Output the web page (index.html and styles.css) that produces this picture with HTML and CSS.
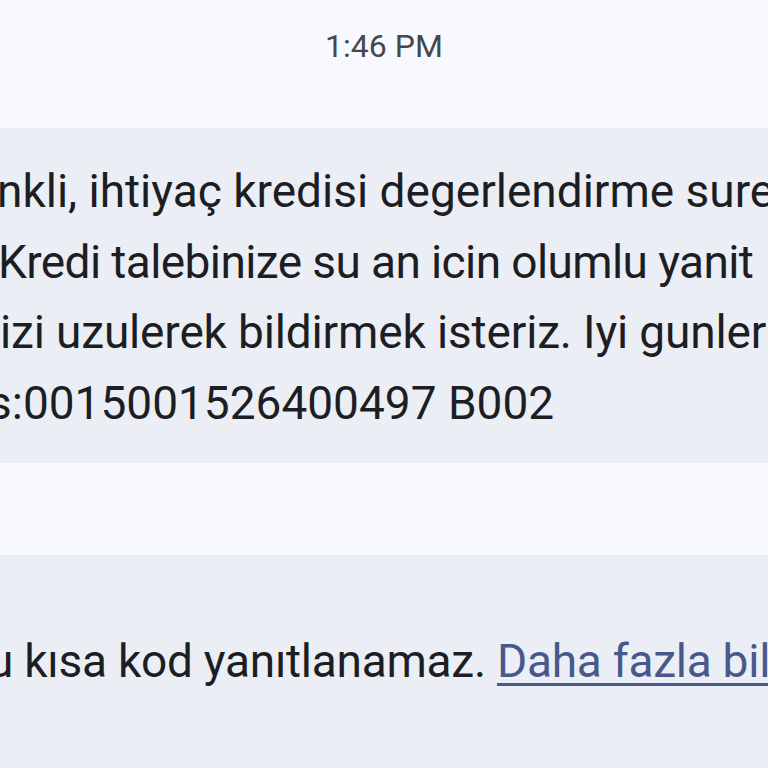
FILE: index.html
```
<!DOCTYPE html>
<html lang="tr">
<head>
<meta charset="utf-8">
<link rel="stylesheet" href="styles.css">
</head>
<body>
<div class="time">1:46 PM</div>
<div class="bubble">
  <div class="line l1">nkli, ihtiyaç kredisi degerlendirme sureci</div>
  <div class="line l2">Kredi talebinize su an icin olumlu yanit</div>
  <div class="line l3">izi uzulerek bildirmek isteriz. Iyi gunler</div>
  <div class="line l4">s:0015001526400497 B002</div>
</div>
<div class="notice">
  <div class="line l5">u kısa kod yanıtlanamaz. <span class="link">Daha fazla bilgi</span></div>
</div>
</body>
</html>
```
FILE: styles.css
```
html, body {
  margin: 0;
  padding: 0;
  background: #f8f9fe;
  width: 768px;
  height: 768px;
  overflow: hidden;
  font-family: Roboto, "Noto Sans", sans-serif;
}
.time {
  padding-top: 26px;
  height: 128px;
  box-sizing: border-box;
  text-align: center;
  font-size: 32px;
  line-height: 40px;
  color: #45474c;
}
.bubble {
  background: #ebeef5;
  height: 335px;
  box-sizing: border-box;
  padding-top: 28px;
  overflow: hidden;
}
.line {
  font-size: 46px;
  line-height: 70.5px;
  color: #1c1e23;
  white-space: nowrap;
}
.l1 { margin-left: -3px; }
.l2 { margin-left: -2px; letter-spacing: -0.6px; }
.l3 { margin-left: 0; letter-spacing: -0.15px; }
.l4 { margin-left: -12px; }
.notice {
  margin-top: 92px;
  background: #ebeef5;
  height: 213px;
  box-sizing: border-box;
  padding-top: 71px;
  overflow: hidden;
}
.l5 { margin-left: -12px; letter-spacing: -0.25px; }
.link {
  color: #47598c;
  text-decoration: underline;
  text-decoration-thickness: 3px;
  text-underline-offset: 6px;
}
```
